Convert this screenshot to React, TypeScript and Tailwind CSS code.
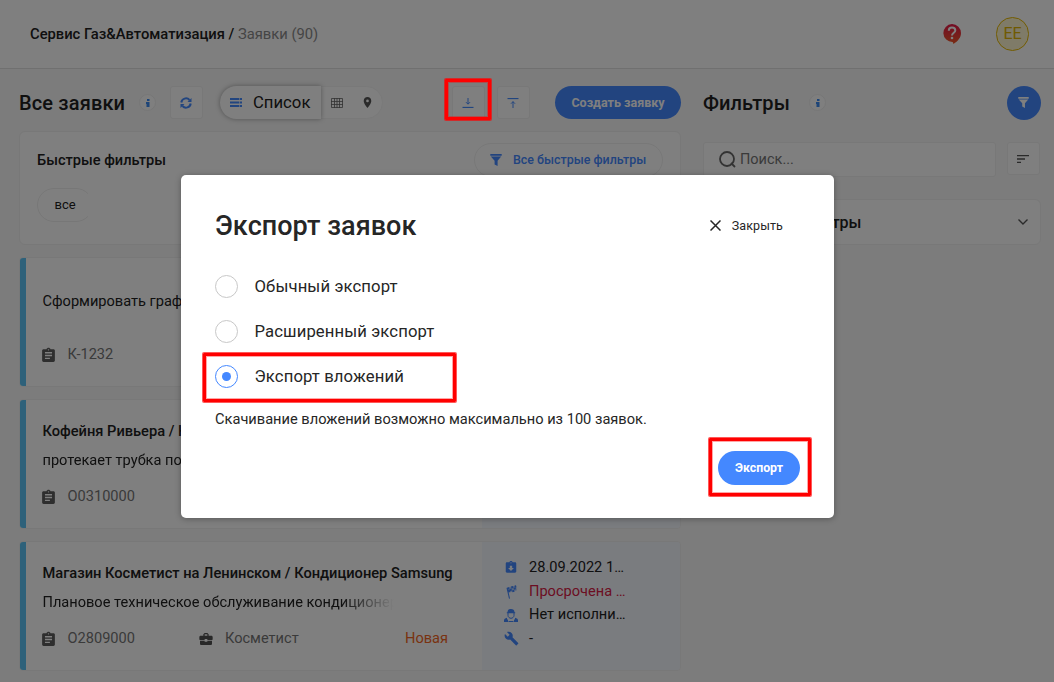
import type { ReactNode } from "react";
import { MdAssignment, MdAssignmentReturned, MdBuild, MdBusinessCenter, MdPlace, MdSort } from "react-icons/md";

function Info() {
  return (
    <span className="flex size-[17px] shrink-0 items-center justify-center rounded-full border border-[#eeeeee] bg-white">
      <svg width="4" height="8" viewBox="0 0 4 8" className="fill-[#3d8bf0]">
        <path d="M1 0h2.500v2H1zM0 3h3.500v5H.500V5H0z" />
      </svg>
    </span>
  );
}

function Funnel({ className }: { className: string }) {
  return (
    <svg viewBox="0 0 12 12" className={className} fill="currentColor">
      <path d="M.3 0h11.4v1.8H.3zM.8 2.6h10.4L7.6 6.8V12L4.6 10.4V6.8z" />
    </svg>
  );
}

function Square({ children }: { children: ReactNode }) {
  return (
    <button className="flex size-[33px] shrink-0 items-center justify-center rounded-[3px] border border-[#f0f0f0] bg-white pr-px text-[#448aff]">
      {children}
    </button>
  );
}

function Header() {
  return (
    <header className="flex h-[69px] items-center justify-between border-b border-[#e0e0e0] bg-white pr-[25px] pl-[30px]">
      <div className="text-[14.75px] leading-5 whitespace-nowrap">
        <span className="font-medium">Сервис Газ&amp;Автоматизация / </span>
        <span className="text-[#8a8a8a]">Заявки (90)</span>
      </div>
      <div className="flex items-center gap-[35px]">
        <svg width="18" height="20" viewBox="0 0 18 20">
          <defs>
            <linearGradient id="help" x1="0" y1="0" x2="0" y2="1">
              <stop offset="0" stopColor="#e8174a" />
              <stop offset="1" stopColor="#f05a28" />
            </linearGradient>
          </defs>
          <path fill="url(#help)" d="M9 0a9 9 0 0 1 9 9c0 4.500-3 8-7.500 11l-.8-2A9 9 0 0 1 9 0z" />
          <path d="M5.800 6.800C5.800 4.500 7.200 3.600 9 3.600s3.300 1 3.300 2.800C12.300 8.600 9 8.800 9 11.400" fill="none" stroke="#fff" strokeWidth="2" />
          <circle cx="9" cy="14" r="1.300" fill="#fff" />
        </svg>
        <div className="flex h-[34px] w-[33px] items-center justify-center rounded-full border border-[#e5b800] bg-[#fff6d0] text-[16px] text-[#e0b400]">ЕЕ</div>
      </div>
    </header>
  );
}

function Toolbar() {
  return (
    <div className="flex h-[33px] items-center">
      <h1 className="w-[120px] text-[20px] font-medium tracking-[0.15px] whitespace-nowrap">Все заявки</h1>
      <Info />
      <div className="ml-[14px]">
        <Square>
          <svg width="12" height="12" viewBox="0 0 12 12" fill="none" stroke="currentColor" strokeWidth="2">
            <path d="M1.300 5.500A4.700 4.700 0 0 1 9.500 3M10.700 6.500A4.700 4.700 0 0 1 2.500 9" />
            <path d="M11.500 1v4h-4zM.5 11V7h4z" fill="currentColor" stroke="none" />
          </svg>
        </Square>
      </div>
      <div className="ml-[17px] flex h-[33px] w-[163px] rounded-full border border-[#f3f3f3] bg-white">
        <div className="-my-px -ml-px flex h-[33px] w-[101px] items-center rounded-l-full bg-white pl-[10px] shadow-[0_0_5px_rgba(0,0,0,0.35)]">
          <svg width="12" height="9" viewBox="0 0 12 9" className="fill-[#448aff]">
            <path d="M0 0h9.400v2H0zM10 0h2v2h-2zM0 3.500h9.400v2H0zM10 3.500h2v2h-2zM0 7h9.400v2H0zM10 7h2v2h-2z" />
          </svg>
          <span className="ml-[11px] text-[16.700px]">Список</span>
        </div>
        <div className="flex flex-1 items-center pl-[10px] text-[#666]">
          <svg width="12" height="10" viewBox="0 0 12 10" fill="none" stroke="currentColor" strokeWidth="1">
            <path d="M.5.5h11v9H.5zM0 3.500h12M0 6.500h12M3.500 0v10M6 0v10M8.500 0v10" opacity=".8" />
          </svg>
          <MdPlace className="ml-[18px] size-[13px] text-[#555]" />
        </div>
      </div>
      <div className="ml-[69px] flex gap-3">
        <Square>
          <svg width="12" height="10" viewBox="0 0 12 10" fill="none" stroke="currentColor">
            <path d="M.5 9.500h11" strokeWidth="1.300" />
            <path d="M6 0v6M4 4.200l2 2 2-2" />
          </svg>
        </Square>
        <Square>
          <svg width="12" height="10" viewBox="0 0 12 10" fill="none" stroke="currentColor">
            <path d="M.5.5h11" strokeWidth="1.300" />
            <path d="M6 3.500V10M4 5.700l2-2 2 2" />
          </svg>
        </Square>
      </div>
      <button className="ml-[25px] h-[33px] w-[126px] rounded-full bg-[#4488ff] pt-[1px] text-[12.500px] font-bold whitespace-nowrap text-white">Создать заявку</button>
    </div>
  );
}

function QuickFilters() {
  return (
    <section className="mt-3 h-[114px] rounded-md border border-[#f0f0f0] bg-white pr-[17px] pl-[17px]">
      <div className="flex items-center justify-between pt-[11px]">
        <h2 className="pt-[2px] text-[14.600px] font-medium">Быстрые фильтры</h2>
        <button className="flex h-[34px] w-[189px] items-center rounded-full border border-[#f0f0f0] pl-[15px] text-[12.450px] font-medium whitespace-nowrap text-[#4488ff]">
          <Funnel className="mr-[11px] size-3" />
          Все быстрые фильтры
        </button>
      </div>
      <div className="mt-[11px] w-[51px] overflow-hidden">
        <div className="flex h-[34px] w-[56px] items-center rounded-full border border-[#eee] pl-[16.500px] text-[13px]">все</div>
      </div>
    </section>
  );
}

function Card({ title, text, id, children, aside }: { title?: string; text: string; id: string; children?: ReactNode; aside?: ReactNode }) {
  return (
    <article className="mt-3 flex h-[130px] overflow-hidden rounded-[4px] border border-[#f0f0f0] bg-white">
      <div className="w-[6px] shrink-0 bg-[#5cc3f5]" />
      <div className="flex w-[456px] shrink-0 flex-col pl-[16.500px]">
        <div className="flex h-[74px] flex-col justify-end whitespace-nowrap">
          {title ? (
            <>
              <div className="h-[29px] text-[14.650px] leading-5 font-medium">{title}</div>
              <div className="h-[24px] w-[351px] overflow-hidden mask-r-from-85% text-[14.600px] leading-5">{text}</div>
            </>
          ) : (
            <div className="mb-[21px] text-[14.600px] leading-5">{text}</div>
          )}
        </div>
        <div className="mt-[13px] flex h-5 items-center text-[14.600px] text-[#757575]">
          <MdAssignment className="-ml-[2.500px] size-[17px] text-[#5c5c5c]" />
          <span className="ml-[10.500px]">{id}</span>
          {children}
        </div>
      </div>
      <div className="flex-1 bg-[#f5f8ff]">{aside}</div>
    </article>
  );
}

function Flag() {
  return (
    <svg width="13" height="14" viewBox="0 0 13 14" fill="currentColor">
      <path d="M1.500 3l1-.4L5 13.500l-1 .3z" />
      <path d="M2 3l3-1.300 3-.4 3-1 1 5-3 1.300-2.800.3-3 1z" opacity=".35" />
      <path d="M2 3l2-1 .5 2-2 1zM6 1.500l2-.5.5 2-2 .5zM4.500 4l2-.5.5 2-2 .8zM8.500 3l2-.8.5 2-2 .5zM2.800 5.200l2-.7.5 2.200-2 .8zM7 5.600l2-.8.500 2-2 .4zM9.500.7L11 .3l.4 2-1.500.5z" />
    </svg>
  );
}

function Worker() {
  return (
    <svg width="14" height="13" viewBox="0 0 14 13" fill="currentColor">
      <path d="M3.500 3.300C3.500 1 5 0 7 0s3.500 1 3.500 3.300h.7v1H2.800v-1z" />
      <path d="M4 4v2.500C4 8 5.500 9.300 7 9.300S10 8 10 6.500V4" fill="none" stroke="currentColor" />
      <path d="M0 13v-1.500c0-1.400 1-2.200 3-2.800v1.800h1V13zM14 13v-1.500c0-1.400-1-2.200-3-2.800v1.800h-1V13zM4.500 12h5v1h-5z" />
    </svg>
  );
}

function Row({ icon, children, className }: { icon: ReactNode; children: ReactNode; className?: string }) {
  return (
    <div className="flex h-[23.700px] items-center">
      <span className="flex w-[14px] shrink-0 justify-center text-[#4488ff]">{icon}</span>
      <span className={"ml-[11px] text-[14.600px] " + (className ?? "")}>{children}</span>
    </div>
  );
}

function Filters() {
  return (
    <aside className="w-[338px]">
      <div className="flex h-[33px] items-center">
        <h2 className="w-[106px] text-[20px] font-medium tracking-[0.1px]">Фильтры</h2>
        <Info />
        <button className="ml-auto flex size-[34px] items-center justify-center rounded-full bg-[#4488ff] pr-px text-white">
          <Funnel className="size-[11px]" />
        </button>
      </div>
      <div className="mt-[23px] mr-px flex justify-between">
        <div className="flex h-[35px] w-[293px] items-center rounded-[3px] border border-[#f0f0f0] bg-white pl-[15px] text-[#757575]">
          <svg width="17" height="17" viewBox="0 0 17 17" fill="none" stroke="#666" strokeWidth="1.800">
            <circle cx="8" cy="8" r="7" />
            <path d="M12 12l4 4" />
          </svg>
          <span className="ml-[4px] text-[14.500px]">Поиск...</span>
        </div>
        <Square>
          <MdSort className="size-[16px] text-[#555]" />
        </Square>
      </div>
      <div className="mt-[22px] flex h-[46px] items-center justify-between rounded-md border border-[#f0f0f0] bg-white pr-3 pl-4">
        <span className="pt-[2px] text-[16px] font-medium">Быстрые фильтры</span>
        <svg width="10" height="6" viewBox="0 0 10 6" fill="none" stroke="#555" strokeWidth="1.400">
          <path d="M.5.5L5 5 9.500.5" />
        </svg>
      </div>
    </aside>
  );
}

function Option({ label, checked }: { label: string; checked?: boolean }) {
  return (
    <label className="flex h-[45px] items-center">
      <span className={"flex size-[23px] items-center justify-center rounded-full border " + (checked ? "border-[#4488ff]" : "border-[#c8c8c8]")}>
        {checked && <span className="size-[9px] rounded-full bg-[#4488ff]" />}
      </span>
      <span className="ml-[16.500px] text-[16.700px] tracking-[0.1px]">{label}</span>
    </label>
  );
}

function Modal() {
  return (
    <div className="absolute inset-0 bg-black/50 pt-[175px] pl-[181px]">
      <div className="h-[343px] w-[653px] rounded-[5px] bg-white pl-[34px] text-[#262626] shadow-[0_1px_6px_rgba(0,0,0,0.3)]">
        <div className="flex h-[89px] items-center justify-between pt-[12px] pr-[51px]">
          <h2 className="pt-[1px] text-[27px] font-medium tracking-[0.050px]">Экспорт заявок</h2>
          <button className="flex items-center text-[12.500px] tracking-[0.1px]">
            <svg width="11" height="11" viewBox="0 0 11 11" fill="none" stroke="currentColor" strokeWidth="1.500" className="mr-[11px]">
              <path d="M.5.5l10 10M10.500.5l-10 10" />
            </svg>
            <span className="pt-[2px]">Закрыть</span>
          </button>
        </div>
        <Option label="Обычный экспорт" />
        <Option label="Расширенный экспорт" />
        <Option label="Экспорт вложений" checked />
        <p className="mt-[10px] text-[14.630px] leading-5 whitespace-nowrap">Скачивание вложений возможно максимально из 100 заявок.</p>
        <div className="mt-[22px] flex justify-end pr-[34px]">
          <button className="h-[34px] w-[82px] rounded-full bg-[#4488ff] text-[12.300px] font-bold text-white">Экспорт</button>
        </div>
      </div>
    </div>
  );
}

function Marker({ className }: { className: string }) {
  return (
    <div className={"absolute rounded-[1px] border-3 border-[#ff0000] shadow-[0_0_0_1px_rgba(255,0,0,0.65),inset_0_0_0_1px_rgba(255,0,0,0.35)] " + className} />
  );
}

export default function App() {
  return (
    <div className="relative h-[682px] w-[1054px] overflow-hidden bg-[#f8f8f8] font-[Roboto,sans-serif] text-[#212121]">
      <Header />
      <main className="flex gap-[22px] pt-[17px] pl-[19px]">
        <div className="w-[662px]">
          <Toolbar />
          <QuickFilters />
          <Card text="Сформировать график работ" id="К-1232" />
          <Card title="Кофейня Ривьера / Кондиционер" text="протекает трубка под раковиной" id="О0310000" />
          <Card
            title="Магазин Косметист на Ленинском / Кондиционер Samsung"
            text="Плановое техническое обслуживание кондиционеров"
            id="О2809000"
            aside={
              <div className="pt-[14px] pl-[22px]">
                <Row icon={<MdAssignmentReturned className="size-[15px]" />}>28.09.2022 1…</Row>
                <Row icon={<Flag />} className="text-[#d81b45]">Просрочена …</Row>
                <Row icon={<Worker />}>Нет исполни…</Row>
                <Row icon={<MdBuild className="size-[15px] shrink-0" />}>-</Row>
              </div>
            }
          >
            <MdBusinessCenter className="ml-[63.500px] size-[16px] text-[#505050]" />
            <span className="ml-[10.500px]">Косметист</span>
            <span className="mr-[34px] ml-auto text-[#f26522]">Новая</span>
          </Card>
        </div>
        <Filters />
      </main>
      <Modal />
      <Marker className="top-[79px] left-[445px] h-[41px] w-[46px]" />
      <Marker className="top-[353px] left-[203px] h-[49px] w-[253px]" />
      <Marker className="top-[438px] left-[709px] h-[58px] w-[102px]" />
    </div>
  );
}
